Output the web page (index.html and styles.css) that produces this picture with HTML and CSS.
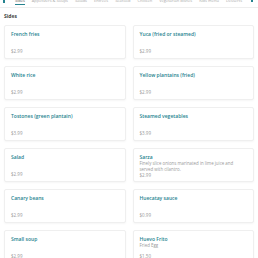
FILE: index.html
```html
<!DOCTYPE html>
<html lang="en">
<head>
    <meta charset="UTF-8">
    <title>Menu - Sides</title>
    <link rel="stylesheet" href="styles.css">
</head>
<body>
    <nav class="tabs">
        <span class="tab-arrow tab-arrow-left"></span>
        <ul class="tab-list">
            <li class="active">Sides</li>
            <li>Appetizers &amp; Soups</li>
            <li>Salads</li>
            <li>Entrées</li>
            <li>Seafood</li>
            <li>Chicken</li>
            <li>Vegetarian dishes</li>
            <li>Kids menu</li>
            <li>Desserts</li>
        </ul>
        <span class="tab-arrow tab-arrow-right"></span>
    </nav>

    <section class="menu-section">
        <h2 class="section-title">Sides</h2>
        <div class="item-grid">
            <div class="item-card">
                <div><h3 class="item-name">French fries</h3></div>
                <p class="item-price">$2.99</p>
            </div>
            <div class="item-card">
                <div><h3 class="item-name">Yuca (fried or steamed)</h3></div>
                <p class="item-price">$2.99</p>
            </div>
            <div class="item-card">
                <div><h3 class="item-name">White rice</h3></div>
                <p class="item-price">$2.99</p>
            </div>
            <div class="item-card">
                <div><h3 class="item-name">Yellow plantains (fried)</h3></div>
                <p class="item-price">$2.99</p>
            </div>
            <div class="item-card">
                <div><h3 class="item-name">Tostones (green plantain)</h3></div>
                <p class="item-price">$3.99</p>
            </div>
            <div class="item-card">
                <div><h3 class="item-name">Steamed vegetables</h3></div>
                <p class="item-price">$3.99</p>
            </div>
            <div class="item-card">
                <div><h3 class="item-name">Salad</h3></div>
                <p class="item-price">$2.99</p>
            </div>
            <div class="item-card">
                <div>
                    <h3 class="item-name">Sarza</h3>
                    <p class="item-desc">Finely slice onions marinated in lime juice and served with cilantro.</p>
                </div>
                <p class="item-price">$2.99</p>
            </div>
            <div class="item-card">
                <div><h3 class="item-name">Canary beans</h3></div>
                <p class="item-price">$2.99</p>
            </div>
            <div class="item-card">
                <div><h3 class="item-name">Huecatay sauce</h3></div>
                <p class="item-price">$0.99</p>
            </div>
            <div class="item-card">
                <div><h3 class="item-name">Small soup</h3></div>
                <p class="item-price">$2.99</p>
            </div>
            <div class="item-card">
                <div>
                    <h3 class="item-name">Huevo Frito</h3>
                    <p class="item-desc">Fried Egg</p>
                </div>
                <p class="item-price">$1.50</p>
            </div>
        </div>
    </section>
</body>
</html>
```

FILE: styles.css
```css
*,
*:before,
*:after{
    box-sizing:border-box;
}
body{
    margin:0;
    background:#fff;
    font-family:"Open Sans","Liberation Sans",Arial,sans-serif;
    color:#333;
    overflow:hidden;
}
h2,
h3,
p,
ul{
    margin:0;
    padding:0;
}
ul{
    list-style:none;
}

/* tab bar, scrolled so only its lower edge shows */
.tabs{
    display:flex;
    align-items:flex-end;
    height:9px;
    margin-top:-1px;
    border-bottom:1px solid #eee;
    overflow:hidden;
}
.tab-list{
    display:flex;
    flex:1;
    gap:7px;
    padding:0 0 4px 10px;
    font-size:4px;
    line-height:5px;
    color:#aaa;
    white-space:nowrap;
    overflow:hidden;
}
.tab-list li{
    position:relative;
}
.tab-list li.active{
    color:#555;
}
.tab-list li.active:after{
    content:"";
    position:absolute;
    left:0;
    right:0;
    bottom:-2px;
    height:1px;
    background:#25838f;
}
.tab-arrow{
    width:2px;
    height:5px;
    margin-bottom:4px;
    background:#25838f;
    flex:none;
}
.tab-arrow-left{
    margin-left:3px;
    height:4px;
}
.tab-arrow-right{
    margin:0 5px 5px 4px;
}

/* section */
.menu-section{
    padding:5px 4px 0;
}
.section-title{
    font-size:5px;
    line-height:6px;
    font-weight:700;
    color:#444;
    margin-bottom:6px;
}
.item-grid{
    display:grid;
    grid-template-columns:1fr 1fr;
    column-gap:7px;
    row-gap:7px;
}
.item-card{
    display:flex;
    flex-direction:column;
    justify-content:space-between;
    height:34px;
    padding:5px 6px 4px;
    background:#fff;
    border:1px solid #efefef;
    border-radius:2px;
    box-shadow:0 1px 2px rgba(0,0,0,.04);
}
.item-name{
    font-size:5px;
    line-height:6px;
    font-weight:600;
    color:#25838f;
}
.item-desc{
    margin-top:0;
    font-size:4.4px;
    line-height:6px;
    color:#999;
    padding-right:2px;
}
.item-price{
    font-size:4.5px;
    line-height:6px;
    color:#999;
}
```
